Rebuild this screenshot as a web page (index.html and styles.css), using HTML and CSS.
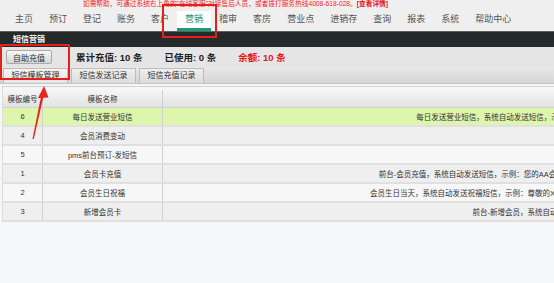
FILE: index.html
```html
<!DOCTYPE html>
<html lang="zh-CN">
<head>
  <meta charset="UTF-8">
  <title>短信营销</title>
  <link rel="stylesheet" href="styles.css">
</head>
<body>
  <div class="topbar">
    <div class="notice">如需帮助，可通过系统右上角的"在线客服"对接售后人员，或者拨打服务热线4008-618-028。<b>[查看详情]</b></div>
    <div class="menu">
      <span>主页</span>
      <span>预订</span>
      <span>登记</span>
      <span>账务</span>
      <span>客户</span>
      <span class="active">营销</span>
      <span>稽审</span>
      <span>客房</span>
      <span>营业点</span>
      <span>进销存</span>
      <span>查询</span>
      <span>报表</span>
      <span>系统</span>
      <span>帮助中心</span>
    </div>
  </div>

  <div class="titlebar">短信营销</div>

  <div class="stats">
    <button class="btn">自助充值</button>
    <span class="stat">累计充值: 10 条</span>
    <span class="stat">已使用: 0 条</span>
    <span class="stat red">余额: 10 条</span>
  </div>

  <div class="tabs">
    <span class="tab active">短信模板管理</span>
    <span class="tab">短信发送记录</span>
    <span class="tab">短信充值记录</span>
  </div>

  <div class="grid">
    <table>
      <thead>
        <tr><th class="c-id">模板编号</th><th class="c-name">模板名称</th><th class="c-desc"></th></tr>
      </thead>
      <tbody>
        <tr class="sel"><td>6</td><td>每日发送营业短信</td><td class="desc">每日发送营业短信，系统自动发送短信，示例：尊敬的经理您好，今日营业收入XX元，客房收入元。</td></tr>
        <tr><td>4</td><td>会员消费变动</td><td class="desc"></td></tr>
        <tr><td>5</td><td>pms前台预订-发短信</td><td class="desc"></td></tr>
        <tr><td>1</td><td>会员卡充值</td><td class="desc">前台-会员充值，系统自动发送短信，示例：您的AA会员卡于XX年XX月XX日充值XX元，当前余额为XX元，感谢您的支持！</td></tr>
        <tr><td>2</td><td>会员生日祝福</td><td class="desc">会员生日当天，系统自动发送祝福短信，示例：尊敬的XX会员，今天是您的生日，XX大酒店全体员工祝您生日快乐，万事如意！</td></tr>
        <tr><td>3</td><td>新增会员卡</td><td class="desc">前台-新增会员，系统自动发送短信，示例：欢迎您成为本店会员！</td></tr>
      </tbody>
    </table>
  </div>

  <!-- annotations -->
  <div class="mark mark-nav"></div>
  <div class="mark mark-btn"></div>
  <svg class="arrow" width="60" height="150" viewBox="0 0 60 150">
    <polygon points="32.5,139 33.8,139 43.6,96 41.2,95.5" fill="#e8231f"/>
    <polygon points="44,86 38,98 48.5,97.5" fill="#e8231f"/>
  </svg>
</body>
</html>
```

FILE: styles.css
```css
body {
  margin: 0;
  background: #f5f6f8;
  font-family: "Liberation Sans", "Noto Sans CJK SC", sans-serif;
  color: #333;
  width: 554px;
  height: 283px;
  overflow: hidden;
  position: relative;
}
.topbar {
  background: #efefef;
  height: 31px;
}
.notice {
  height: 11px;
  line-height: 8px;
  padding-left: 83px;
  font-size: 6.7px;
  color: #f0242a;
  white-space: nowrap;
  overflow: hidden;
}
.notice b {
  color: #e01818;
}
.menu {
  display: flex;
  padding-left: 7px;
}
.menu span {
  padding: 0 8px;
  height: 17px;
  line-height: 16px;
  font-size: 9px;
  color: #555;
  border-bottom: 3px solid transparent;
  white-space: nowrap;
}
.menu span.active {
  background: #fff;
  color: #1e8f70;
  border-bottom-color: #1d9a7a;
}
.titlebar {
  height: 15px;
  line-height: 15px;
  border-top: 1px solid #5c5f5f;
  background: #252a2a;
  color: #fff;
  font-size: 8px;
  font-weight: bold;
  padding-left: 13px;
}
.stats {
  display: flex;
  align-items: center;
  height: 20px;
  background: #e5e5e5;
  padding-left: 6px;
}
.btn {
  width: 46px;
  height: 14px;
  padding: 0;
  font-family: inherit;
  font-size: 8px;
  color: #333;
  border: 1px solid #a9a9a9;
  border-radius: 2px;
  background: linear-gradient(#f7f7f7, #d6d6d6);
  margin-right: 24px;
}
.stat {
  font-size: 9.5px;
  font-weight: bold;
  color: #222;
  margin-right: 22px;
  white-space: nowrap;
}
.stat.red {
  color: #e3161b;
}
.tabs {
  display: flex;
  gap: 3px;
  height: 15px;
  padding: 1px 0 0 3px;
  background: linear-gradient(#e8e8e8, #d5d5d5);
  border-bottom: 1px solid #c4c4c4;
}
.tab {
  width: 63px;
  height: 14px;
  line-height: 14px;
  text-align: center;
  font-size: 8px;
  color: #333;
  border: 1px solid #bdbdbd;
  border-bottom: none;
  background: linear-gradient(#efefef, #dcdcdc);
}
.tab.active {
  background: linear-gradient(#f4f4f4, #e4e4e4);
}
.grid {
  margin-top: 2px;
  border-top: 1px solid #d2d2d2;
  padding-top: 3px;
  margin-left: 2px;
  border-left: 1px solid #dcdcdc;
  overflow: hidden;
}
table {
  width: 1000px;
  border-collapse: collapse;
  table-layout: fixed;
  font-size: 7.5px;
  color: #333;
}
th {
  height: 17px;
  padding: 0;
  font-weight: normal;
  background: linear-gradient(#f6f6f6, #e2e2e2);
  border-right: 1px solid #cfcfcf;
  border-bottom: 1px solid #d0d0d0;
}
.c-id { width: 39px; }
.c-name { width: 119px; }
td {
  height: 17px;
  padding: 0;
  text-align: center;
  white-space: nowrap;
  border-right: 1px solid #d0d0d0;
  border-bottom: 2px solid #e0e0e0;
  background: #f7f7f8;
}
tbody tr:nth-child(even) td {
  background: #efefef;
}
tbody tr:nth-child(4) td,
tbody tr:nth-child(6) td {
  background: #efefef;
}
tbody tr:nth-child(5) td {
  background: #f7f7f8;
}
tr.sel td {
  background: #def6ab;
}
td.desc {
  overflow: hidden;
}
.mark {
  position: absolute;
  border: 2px solid #e3201d;
}
.mark-nav {
  left: 162px;
  top: 4px;
  width: 51px;
  height: 30px;
}
.mark-btn {
  left: 0;
  top: 44px;
  width: 66px;
  height: 32px;
}
.arrow {
  position: absolute;
  left: 0;
  top: 0;
}
```
